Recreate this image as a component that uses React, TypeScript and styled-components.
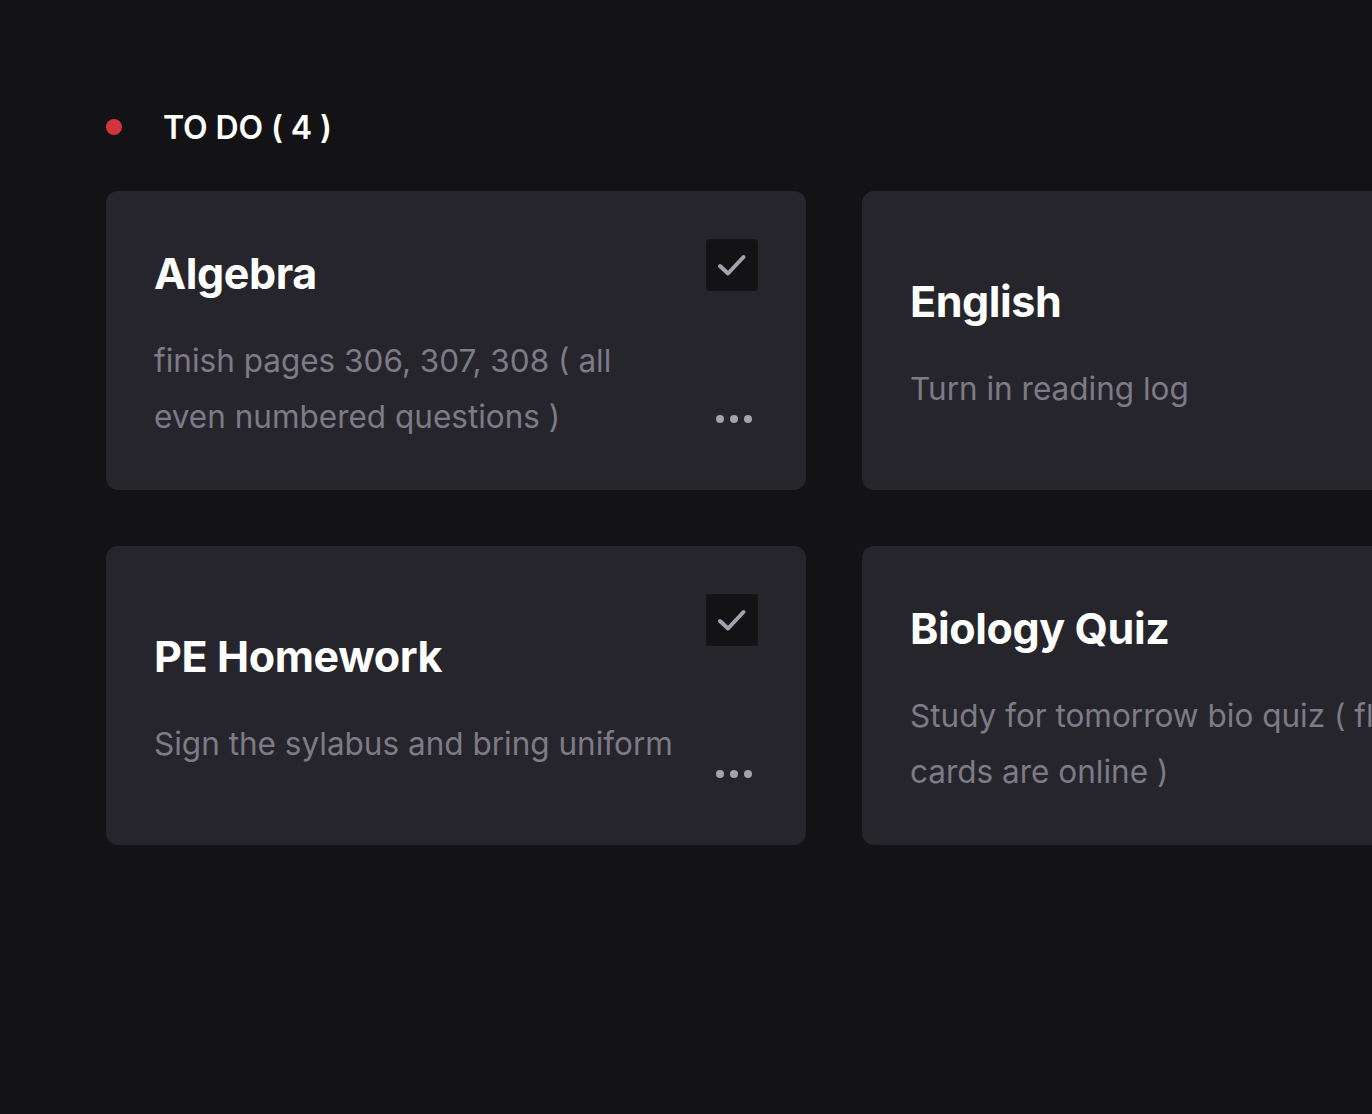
import styled, { createGlobalStyle } from 'styled-components';

type Task = {
  title: string;
  body: string;
  done: boolean;
};

const tasks: Task[] = [
  { title: 'Algebra', body: 'finish pages 306, 307, 308 ( all even numbered questions )', done: true },
  { title: 'English', body: 'Turn in reading log', done: true },
  { title: 'PE Homework', body: 'Sign the sylabus and bring uniform', done: true },
  { title: 'Biology Quiz', body: 'Study for tomorrow bio quiz ( flash cards are online )', done: true },
];

function App() {
  return (
    <>
      <GlobalStyle />
      <Page>
        <Column>
          <Header>
            <Dot />
            <HeaderTitle>TO DO ( {tasks.length} )</HeaderTitle>
          </Header>
          <Grid>
            {tasks.map(task => (
              <Card key={task.title}>
                <Content>
                  <Title>{task.title}</Title>
                  <Body>{task.body}</Body>
                </Content>
                {task.done && (
                  <Check>
                    <svg width='30' height='24' viewBox='0 0 30 24' fill='none'>
                      <path
                        d='M3 13 L11 20.5 L26.5 4'
                        stroke='#a3a2ad'
                        strokeWidth='4'
                        strokeLinecap='round'
                        strokeLinejoin='round'
                      />
                    </svg>
                  </Check>
                )}
                <More>
                  <span />
                  <span />
                  <span />
                </More>
              </Card>
            ))}
          </Grid>
        </Column>
      </Page>
    </>
  );
}

export default App;

const GlobalStyle = createGlobalStyle`
  html, body {
    margin: 0;
    padding: 0;
    background: #131316;
    overflow: hidden;
  }
  body {
    font-family: Inter, "Noto Sans", sans-serif;
    -webkit-font-smoothing: antialiased;
  }
  * {
    box-sizing: border-box;
  }
`;

const Page = styled.div`
  width: 1372px;
  height: 1114px;
  padding: 106px 0 0 106px;
  overflow: hidden;
`;

const Column = styled.div`
  display: flex;
  flex-direction: column;
  gap: 43px;
`;

const Header = styled.div`
  display: flex;
  align-items: center;
  gap: 41px;
  height: 42px;
`;

const Dot = styled.div`
  width: 16px;
  height: 16px;
  border-radius: 50%;
  background: #d2343e;
  flex-shrink: 0;
`;

const HeaderTitle = styled.h2`
  margin: 0;
  color: #ffffff;
  font-size: 32px;
  font-weight: 600;
  letter-spacing: -0.1px;
  white-space: nowrap;
`;

const Grid = styled.div`
  display: grid;
  grid-template-columns: 700px 700px;
  column-gap: 56px;
  row-gap: 56px;
`;

const Card = styled.div`
  position: relative;
  height: 299px;
  border-radius: 12px;
  background: #26252b;
  padding: 51px 130px 45px 48px;
  display: flex;
  align-items: center;
`;

const Content = styled.div`
  display: flex;
  flex-direction: column;
  gap: 30px;
  max-width: 522px;
`;

const Title = styled.h3`
  margin: 0;
  color: #ffffff;
  font-size: 43px;
  line-height: 60px;
  font-weight: 700;
  letter-spacing: -0.4px;
  white-space: nowrap;
`;

const Body = styled.p`
  margin: 0;
  color: #7c7b87;
  font-size: 31.5px;
  line-height: 56px;
  font-weight: 400;
`;

const Check = styled.div`
  position: absolute;
  top: 48px;
  right: 48px;
  width: 52px;
  height: 52px;
  border-radius: 4px;
  background: #131316;
  display: flex;
  align-items: center;
  justify-content: center;
`;

const More = styled.div`
  position: absolute;
  right: 54px;
  bottom: 67px;
  display: flex;
  gap: 6px;

  & span {
    width: 8px;
    height: 8px;
    border-radius: 50%;
    background: #a3a2ad;
  }
`;
